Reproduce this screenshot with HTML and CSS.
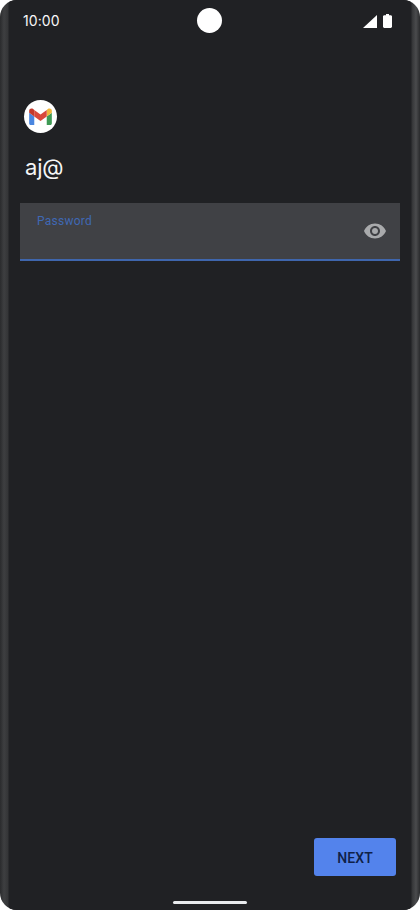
FILE: index.html
```html
<!DOCTYPE html>
<html lang="en">
<head>
<meta charset="utf-8">
<title>Gmail password</title>
<link rel="stylesheet" href="styles.css">
</head>
<body>
<div class="phone">
  <div class="screen">
    <header class="status">
      <span class="time">10:00</span>
      <span class="camera"></span>
      <span class="status-icons">
        <svg class="signal" width="14" height="13" viewBox="0 0 14 13"><path d="M14 0V13H0Z" fill="#fff"/></svg>
        <svg class="battery" width="9" height="14" viewBox="0 0 9 14"><path d="M3 0h3v1.200h1.600c.8 0 1.400.6 1.400 1.400v10c0 .8-.6 1.400-1.400 1.400H1.400C.6 14 0 13.400 0 12.600v-10C0 1.800.6 1.200 1.400 1.200H3z" fill="#fff"/></svg>
      </span>
    </header>
    <main class="content">
      <div class="logo">
        <svg width="23" height="17" viewBox="0 0 24 18">
          <path d="M1.600 18H5.400V8.900L0 4.900V16.400C0 17.300.7 18 1.600 18Z" fill="#4a86e0"/>
          <path d="M18.600 18H22.400C23.300 18 24 17.300 24 16.400V4.900L18.600 8.900Z" fill="#3f9a55"/>
          <path d="M18.600 2V8.900L24 4.900V2.800C24 .9 21.700-.2 20.100 .9Z" fill="#f0b63a"/>
          <path d="M5.400 8.900V2L12 6.900 18.600 2V8.900L12 13.800Z" fill="#d9483b"/>
          <path d="M0 2.800V4.900L5.400 8.900V2L3.900 .9C2.300-.2 0 .9 0 2.800Z" fill="#c5392c"/>
        </svg>
      </div>
      <h1 class="account">aj@</h1>
      <div class="field">
        <span class="field-label">Password</span>
        <svg class="eye" width="24" height="24" viewBox="0 0 24 24"><path d="M12 4.500C7 4.500 2.700 7.600 1 12c1.700 4.400 6 7.500 11 7.500s9.300-3.100 11-7.500c-1.700-4.400-6-7.500-11-7.500zM12 17c-2.800 0-5-2.200-5-5s2.200-5 5-5 5 2.200 5 5-2.200 5-5 5zm0-8c-1.700 0-3 1.300-3 3s1.300 3 3 3 3-1.300 3-3-1.300-3-3-3z" fill="#a9aaac"/></svg>
      </div>
      <div class="actions">
        <button class="next" type="button">NEXT</button>
      </div>
    </main>
    <div class="home-row"><span class="home-bar"></span></div>
  </div>
</div>
</body>
</html>
```
FILE: styles.css
```css
* {
  box-sizing: border-box;
}
html, body {
  margin: 0;
  padding: 0;
  background: #fff;
}
.phone {
  width: 420px;
  height: 910px;
  border-radius: 17px;
  overflow: hidden;
  padding: 0 9px;
  background: linear-gradient(90deg, #2a2b2d 0, #3e3f41 4px, #343537 8px, #202124 9px, #202124 411px, #343537 412px, #4a4b4d 416px, #2a2b2d 420px);
}
.screen {
  height: 910px;
  background: #202124;
  display: flex;
  flex-direction: column;
  font-family: Inter, Roboto, sans-serif;
  color: #fff;
}
.status {
  height: 42px;
  display: flex;
  align-items: center;
  justify-content: space-between;
  padding: 0 19px 0 14px;
  position: relative;
  flex: none;
}
.time {
  font-size: 14px;
  line-height: 16px;
  letter-spacing: .1px;
  color: #f8f8f8;
}
.camera {
  position: absolute;
  left: 188px;
  top: 8px;
  width: 25px;
  height: 25px;
  border-radius: 50%;
  background: #fff;
}
.status-icons {
  display: flex;
  align-items: center;
  gap: 6px;
}
.content {
  flex: 1;
  display: flex;
  flex-direction: column;
  padding: 58px 0 0;
  min-height: 0;
}
.logo {
  width: 33px;
  height: 33px;
  margin-left: 15px;
  border-radius: 50%;
  background: #fff;
  display: flex;
  align-items: center;
  justify-content: center;
}
.account {
  margin: 20px 0 1px 16px;
  font-size: 22px;
  font-weight: 400;
  line-height: 28px;
  letter-spacing: -.2px;
  color: #f4f5f6;
}
.field {
  margin: 21px 11px 0;
  height: 58px;
  background: #404145;
  border-bottom: 2px solid #3f66ad;
  display: flex;
  justify-content: space-between;
  padding: 10px 13px 0 17px;
  font-family: Roboto, sans-serif;
}
.field-label {
  font-size: 12px;
  line-height: 15px;
  letter-spacing: .25px;
  padding-top: 1px;
  color: #3f68b4;
}
.eye {
  margin-top: 6px;
}
.actions {
  margin-top: auto;
  display: flex;
  justify-content: flex-end;
  padding: 0 15px 25px 0;
}
.next {
  width: 82px;
  height: 38px;
  border: 0;
  border-radius: 3px;
  padding: 2px 0 0;
  background: #5383ec;
  color: #0f2148;
  font: 500 14px Roboto, sans-serif;
  letter-spacing: .1px;
}
.home-row {
  flex: none;
  height: 9px;
  display: flex;
  justify-content: center;
}
.home-bar {
  width: 74px;
  height: 3px;
  background: #e8eaed;
  border-radius: 2px;
}
```
